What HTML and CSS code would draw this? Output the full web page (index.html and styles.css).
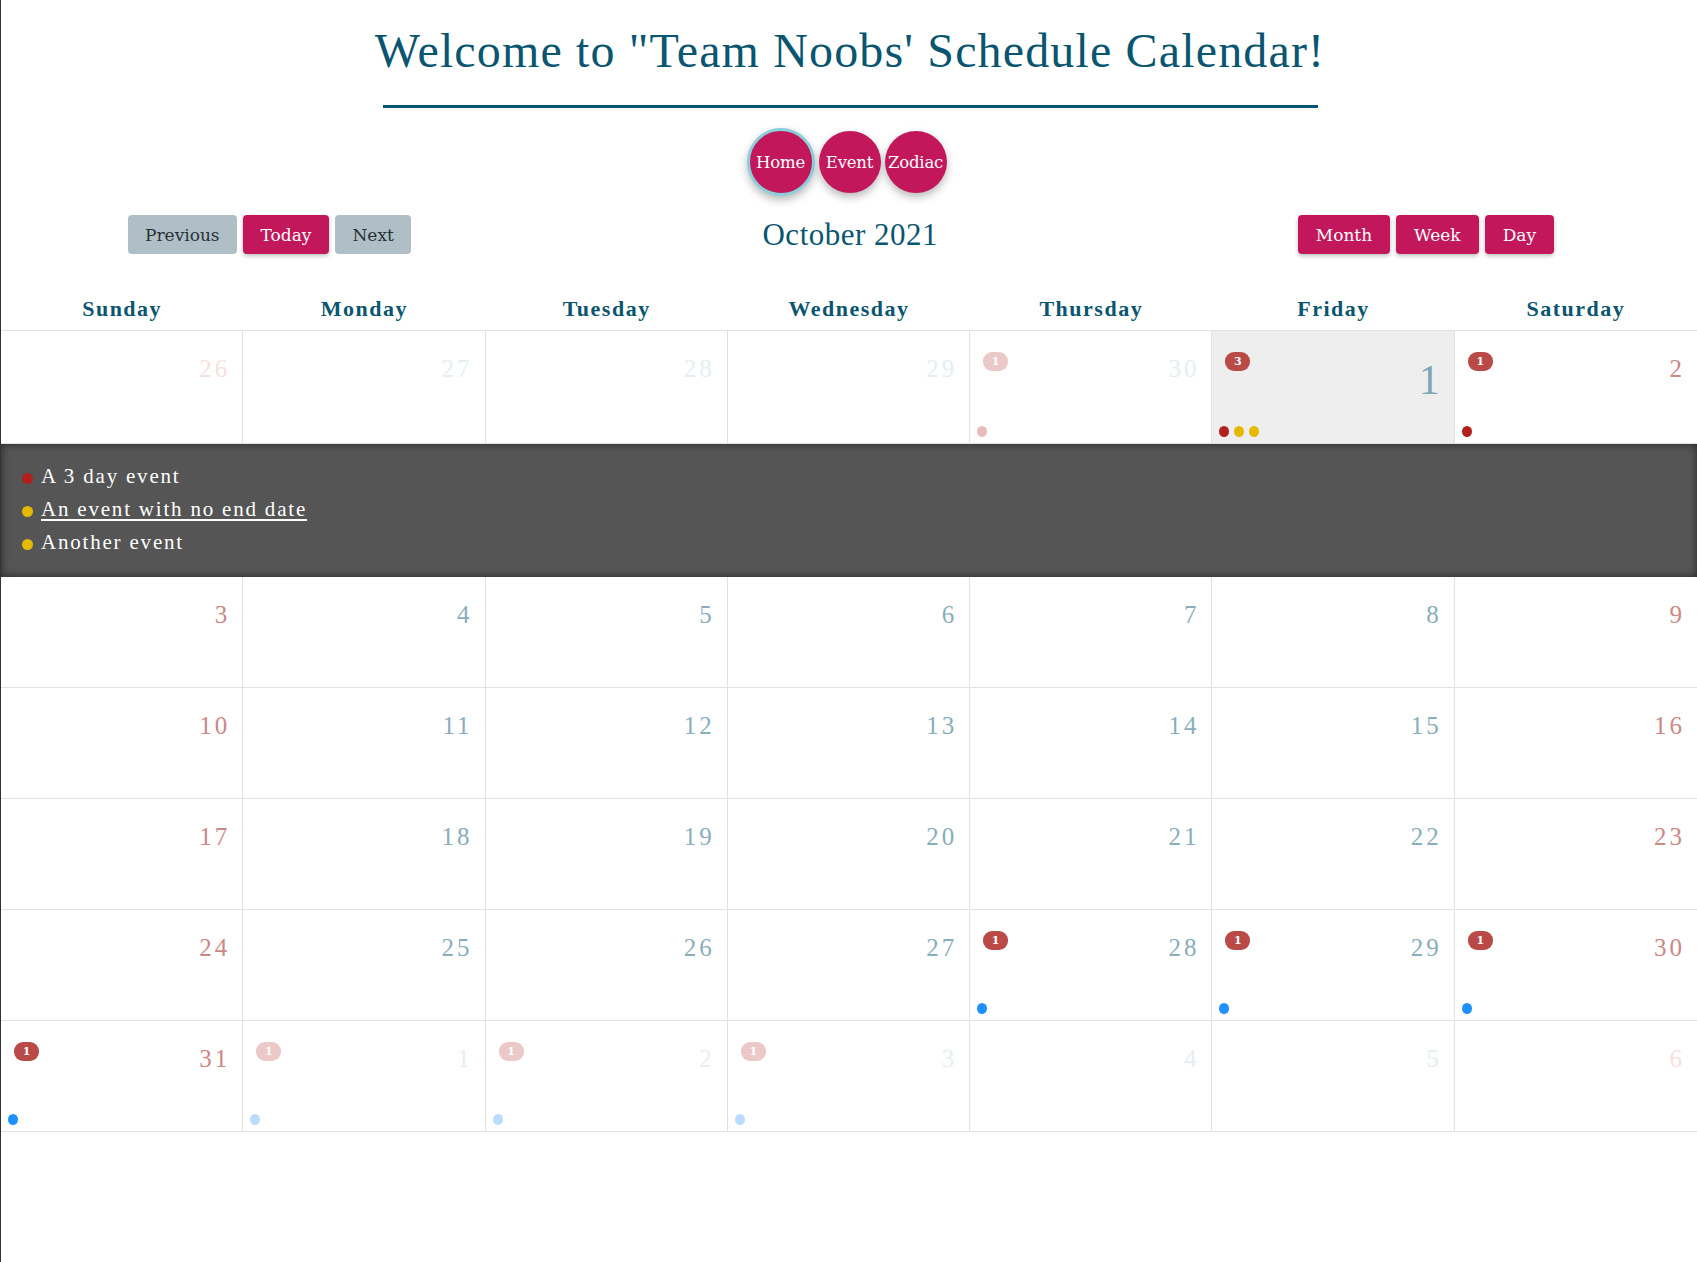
FILE: index.html
```html
<!DOCTYPE html>
<html lang="en">
<head>
<meta charset="utf-8">
<title>Team Noobs' Schedule Calendar</title>
<link rel="stylesheet" href="styles.css">
</head>
<body>
<header class="masthead">
  <h1 class="site-title">Welcome to "Team Noobs' Schedule Calendar!</h1>
  <div class="title-rule"></div>
  <nav class="circle-nav">
    <a class="circle-btn active" href="#">Home</a>
    <a class="circle-btn" href="#">Event</a>
    <a class="circle-btn" href="#">Zodiac</a>
  </nav>
</header>

<div class="toolbar">
  <div class="btn-group">
    <button class="btn btn-gray">Previous</button>
    <button class="btn btn-pink">Today</button>
    <button class="btn btn-gray">Next</button>
  </div>
  <h2 class="month-title">October 2021</h2>
  <div class="btn-group">
    <button class="btn btn-pink">Month</button>
    <button class="btn btn-pink">Week</button>
    <button class="btn btn-pink">Day</button>
  </div>
</div>

<section class="calendar">
  <div class="weekdays">
    <div class="weekday">Sunday</div>
    <div class="weekday">Monday</div>
    <div class="weekday">Tuesday</div>
    <div class="weekday">Wednesday</div>
    <div class="weekday">Thursday</div>
    <div class="weekday">Friday</div>
    <div class="weekday">Saturday</div>
  </div>

  <div class="week first">
    <div class="cell weekend out"><div class="cell-top"><span class="num">26</span></div></div>
    <div class="cell out"><div class="cell-top"><span class="num">27</span></div></div>
    <div class="cell out"><div class="cell-top"><span class="num">28</span></div></div>
    <div class="cell out"><div class="cell-top"><span class="num">29</span></div></div>
    <div class="cell out">
      <div class="cell-top"><span class="badge faded">1</span><span class="num">30</span></div>
      <div class="dots"><span class="dot red faded"></span></div>
    </div>
    <div class="cell today">
      <div class="cell-top"><span class="badge">3</span><span class="num">1</span></div>
      <div class="dots"><span class="dot red"></span><span class="dot yellow"></span><span class="dot yellow"></span></div>
    </div>
    <div class="cell weekend">
      <div class="cell-top"><span class="badge">1</span><span class="num">2</span></div>
      <div class="dots"><span class="dot red"></span></div>
    </div>
  </div>

  <div class="event-panel">
    <div class="event-item"><span class="dot red"></span><span class="event-name">A 3 day event</span></div>
    <div class="event-item"><span class="dot yellow"></span><a class="event-name event-link" href="#">An event with no end date</a></div>
    <div class="event-item"><span class="dot yellow"></span><span class="event-name">Another event</span></div>
  </div>

  <div class="week">
    <div class="cell weekend"><div class="cell-top"><span class="num">3</span></div></div>
    <div class="cell"><div class="cell-top"><span class="num">4</span></div></div>
    <div class="cell"><div class="cell-top"><span class="num">5</span></div></div>
    <div class="cell"><div class="cell-top"><span class="num">6</span></div></div>
    <div class="cell"><div class="cell-top"><span class="num">7</span></div></div>
    <div class="cell"><div class="cell-top"><span class="num">8</span></div></div>
    <div class="cell weekend"><div class="cell-top"><span class="num">9</span></div></div>
  </div>

  <div class="week">
    <div class="cell weekend"><div class="cell-top"><span class="num">10</span></div></div>
    <div class="cell"><div class="cell-top"><span class="num">11</span></div></div>
    <div class="cell"><div class="cell-top"><span class="num">12</span></div></div>
    <div class="cell"><div class="cell-top"><span class="num">13</span></div></div>
    <div class="cell"><div class="cell-top"><span class="num">14</span></div></div>
    <div class="cell"><div class="cell-top"><span class="num">15</span></div></div>
    <div class="cell weekend"><div class="cell-top"><span class="num">16</span></div></div>
  </div>

  <div class="week">
    <div class="cell weekend"><div class="cell-top"><span class="num">17</span></div></div>
    <div class="cell"><div class="cell-top"><span class="num">18</span></div></div>
    <div class="cell"><div class="cell-top"><span class="num">19</span></div></div>
    <div class="cell"><div class="cell-top"><span class="num">20</span></div></div>
    <div class="cell"><div class="cell-top"><span class="num">21</span></div></div>
    <div class="cell"><div class="cell-top"><span class="num">22</span></div></div>
    <div class="cell weekend"><div class="cell-top"><span class="num">23</span></div></div>
  </div>

  <div class="week">
    <div class="cell weekend"><div class="cell-top"><span class="num">24</span></div></div>
    <div class="cell"><div class="cell-top"><span class="num">25</span></div></div>
    <div class="cell"><div class="cell-top"><span class="num">26</span></div></div>
    <div class="cell"><div class="cell-top"><span class="num">27</span></div></div>
    <div class="cell">
      <div class="cell-top"><span class="badge">1</span><span class="num">28</span></div>
      <div class="dots"><span class="dot blue"></span></div>
    </div>
    <div class="cell">
      <div class="cell-top"><span class="badge">1</span><span class="num">29</span></div>
      <div class="dots"><span class="dot blue"></span></div>
    </div>
    <div class="cell weekend">
      <div class="cell-top"><span class="badge">1</span><span class="num">30</span></div>
      <div class="dots"><span class="dot blue"></span></div>
    </div>
  </div>

  <div class="week">
    <div class="cell weekend">
      <div class="cell-top"><span class="badge">1</span><span class="num">31</span></div>
      <div class="dots"><span class="dot blue"></span></div>
    </div>
    <div class="cell out">
      <div class="cell-top"><span class="badge faded">1</span><span class="num">1</span></div>
      <div class="dots"><span class="dot blue faded"></span></div>
    </div>
    <div class="cell out">
      <div class="cell-top"><span class="badge faded">1</span><span class="num">2</span></div>
      <div class="dots"><span class="dot blue faded"></span></div>
    </div>
    <div class="cell out">
      <div class="cell-top"><span class="badge faded">1</span><span class="num">3</span></div>
      <div class="dots"><span class="dot blue faded"></span></div>
    </div>
    <div class="cell out"><div class="cell-top"><span class="num">4</span></div></div>
    <div class="cell out"><div class="cell-top"><span class="num">5</span></div></div>
    <div class="cell weekend out"><div class="cell-top"><span class="num">6</span></div></div>
  </div>
</section>
</body>
</html>
```

FILE: styles.css
```css
* { box-sizing: border-box; }

html, body {
  margin: 0;
  padding: 0;
  background: #ffffff;
}

body {
  min-height: 100vh;
  border-left: 1px solid #333333;
  font-family: "Liberation Serif", "Times New Roman", serif;
  color: #0a5670;
}

.masthead {
  display: flex;
  flex-direction: column;
  align-items: center;
  padding-left: 2px;
}

.site-title {
  margin: 23px 0 0;
  font-family: "Liberation Serif", serif;
  font-weight: normal;
  font-size: 48px;
  line-height: 55px;
  letter-spacing: 1.15px;
  color: #0a5670;
}

.title-rule {
  width: 935px;
  height: 3px;
  margin-top: 27px;
  background: #0a5670;
}

.circle-nav {
  display: flex;
  align-items: center;
  gap: 4px;
  margin-top: 20px;
  margin-right: 7px;
  height: 68px;
}

.circle-btn {
  width: 62px;
  height: 62px;
  border-radius: 50%;
  background: #c2185b;
  color: #ffffff;
  text-decoration: none;
  font-family: "DejaVu Serif", serif;
  font-size: 16.5px;
  letter-spacing: -0.2px;
  display: flex;
  align-items: center;
  justify-content: center;
  box-shadow: 0 4px 9px rgba(0, 0, 0, 0.28);
}

.circle-btn.active {
  width: 68px;
  height: 68px;
  border: 3px solid #8bcfdc;
}

.toolbar {
  display: flex;
  align-items: center;
  padding: 0 143px 0 127px;
  margin-top: 19px;
}

.btn-group {
  display: flex;
  gap: 6px;
}

.btn {
  height: 39px;
  padding: 0 17px;
  border: none;
  border-radius: 4px;
  font-family: "DejaVu Serif", serif;
  font-size: 17px;
  cursor: pointer;
}

.btn-gray {
  background: #b0bec5;
  color: #263238;
}

.btn-pink {
  background: #c2185b;
  color: #ffffff;
  padding: 0 18px;
  box-shadow: 0 2px 4px rgba(0, 0, 0, 0.25);
}

.month-title {
  flex: 1;
  margin: 0;
  padding-right: 8px;
  text-align: center;
  font-weight: normal;
  font-size: 31px;
  letter-spacing: 0.5px;
  color: #0a5670;
}

.weekdays {
  display: grid;
  grid-template-columns: repeat(7, 1fr);
  border-bottom: 1px solid #e2e2e2;
}

.weekday {
  padding: 42px 0 8px;
  text-align: center;
  font-weight: bold;
  font-size: 22px;
  line-height: 26px;
  letter-spacing: 1.5px;
  color: #0a5670;
}

.week {
  display: grid;
  grid-template-columns: repeat(7, 1fr);
  height: 111px;
  border-bottom: 1px solid #e2e2e2;
}

.week.first {
  height: 113px;
}

.cell {
  display: flex;
  flex-direction: column;
  border-right: 1px solid #e2e2e2;
  padding: 21px 12px 6px 13px;
}

.cell:last-child {
  border-right: none;
}

.cell.today {
  background: #eeeeee;
}

.cell-top {
  display: flex;
  align-items: flex-start;
}

.num {
  margin-left: auto;
  margin-top: 4px;
  font-size: 25px;
  line-height: 25px;
  letter-spacing: 3px;
  color: #88aebc;
}

.cell.weekend .num { color: #cc8787; }
.cell.out .num { color: #e5eef2; }
.cell.weekend.out .num { color: #f6e0e0; }

.cell.today .num {
  font-size: 42px;
  line-height: 42px;
  margin-top: 7px;
  margin-right: -1px;
  color: #7ea6b5;
}

.badge {
  width: 25px;
  height: 19px;
  border-radius: 9px;
  background: #b94a48;
  color: #ffffff;
  font-family: "DejaVu Serif", serif;
  font-weight: bold;
  font-size: 11px;
  line-height: 19px;
  text-align: center;
}

.badge.faded { background: #ebc9c8; }

.dots {
  margin-top: auto;
  margin-left: -6px;
  display: flex;
  gap: 5px;
}

.dot {
  display: inline-block;
  width: 10px;
  height: 11px;
  border-radius: 50%;
  flex: none;
}

.dot.red { background: #b21f1f; }
.dot.red.faded { background: #e9bcbc; }
.dot.yellow { background: #e4b900; }
.dot.blue { background: #1e90ff; }
.dot.blue.faded { background: #bbdcfd; }

.event-panel {
  height: 133px;
  padding: 16px 0 0 21px;
  background: #555555;
  box-shadow: inset 0 0 9px rgba(0, 0, 0, 0.55);
}

.event-item {
  display: flex;
  align-items: center;
  gap: 8px;
  height: 33px;
}

.event-item .dot {
  width: 11px;
  height: 11px;
  margin-top: 4px;
}

.event-name {
  font-size: 21px;
  line-height: 33px;
  letter-spacing: 1.8px;
  color: #ffffff;
}

.event-link {
  text-decoration: underline;
  text-underline-offset: 3px;
  color: #ffffff;
}
```
